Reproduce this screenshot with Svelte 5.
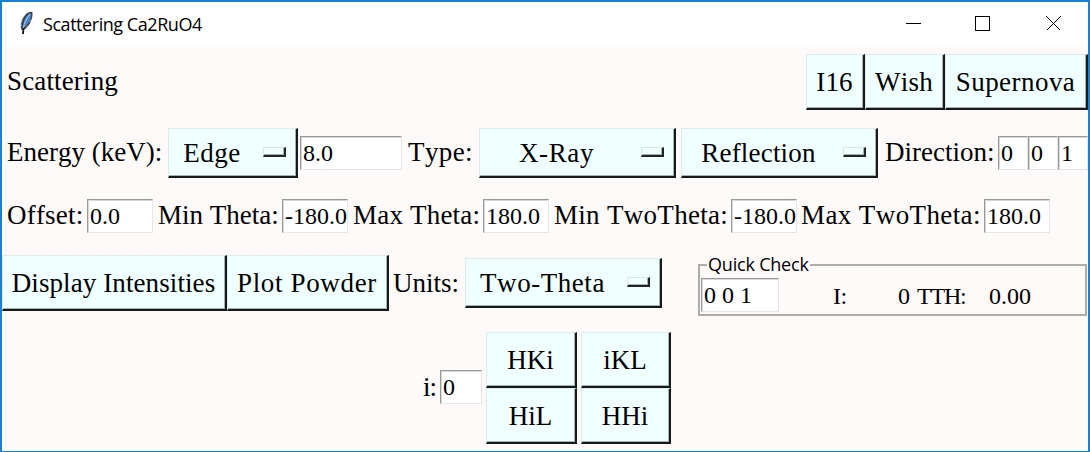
<script>
  const instruments = [
    { text: 'I16', w: 59, track: 0.2 },
    { text: 'Wish', w: 80, track: 0.2 },
    { text: 'Supernova', w: 143, track: 0.45 },
  ];
  const beam = [
    { kind: 'label', text: 'Energy (keV):', w: 162, pad: 5 },
    { kind: 'menu', text: 'Edge', w: 130, gap: 4, track: 0.5 },
    { kind: 'entry', text: '8.0', w: 102, gap: 2 },
    { kind: 'label', text: 'Type:', w: 75, pad: 6, track: 0.4 },
    { kind: 'menu', text: 'X-Ray', w: 197, gap: 2, track: 0.6 },
    { kind: 'menu', text: 'Reflection', w: 197, gap: 5, track: 0.2 },
    { kind: 'label', text: 'Direction:', w: 118, pad: 7 },
    { kind: 'entry', text: '0', w: 30, gap: 2 },
    { kind: 'entry', text: '0', w: 30 },
    { kind: 'entry', text: '1', w: 30 },
  ];
  const limits = [
    { kind: 'label', text: 'Offset:', w: 85, pad: 5, track: 0.2 },
    { kind: 'entry', text: '0.0', w: 66 },
    { kind: 'label', text: 'Min Theta:', w: 129, pad: 5 },
    { kind: 'entry', text: '-180.0', w: 66 },
    { kind: 'label', text: 'Max Theta:', w: 135, pad: 5, track: 0.2 },
    { kind: 'entry', text: '180.0', w: 66 },
    { kind: 'label', text: 'Min TwoTheta:', w: 182, pad: 5, track: 0.3 },
    { kind: 'entry', text: '-180.0', w: 66 },
    { kind: 'label', text: 'Max TwoTheta:', w: 187, pad: 4, track: 0.4 },
    { kind: 'entry', text: '180.0', w: 66 },
  ];
  const actions = [
    { kind: 'button', text: 'Display Intensities', w: 225, track: 0.1 },
    { kind: 'button', text: 'Plot Powder', w: 162, track: 0.65 },
    { kind: 'label', text: 'Units:', w: 74, pad: 4 },
    { kind: 'menu', text: 'Two-Theta', w: 197, gap: 2, track: 0.55 },
  ];
  const planes = ['HKi', 'iKL', 'HiL', 'HHi'];
</script>

{#snippet widget(item)}
  <div
    class={item.kind ?? 'button'}
    style:width="{item.w}px"
    style:margin-left="{item.gap ?? 0}px"
    style:padding-left={item.pad ? `${item.pad}px` : null}
    style:letter-spacing={item.track ? `${item.track}px` : null}
  >
    <span>{item.text}</span>
    {#if item.kind === 'menu'}<i class="indicator"></i>{/if}
  </div>
{/snippet}

<div class="window">
  <header>
    <svg class="feather" width="18" height="26" viewBox="0 0 18 26">
      <path d="M3.500 20C1.500 15 4 8 8 4C11 1.500 14 1 14.500 2.500C15 8 12 16 6.500 19.500Z" fill="#3a4450" />
      <path d="M5.500 17.500C5 12 7 7 11 4C13 3 13.500 4 13 6.500C12 11 9 15.500 5.500 17.500Z" fill="#4a86c8" />
      <path d="M12 4C8.500 8 6.500 13 5 19" stroke="#a9cdf0" fill="none" />
      <path d="M3 10L4.500 11M3 15L4 15.500M13.500 10L11.500 11.500M10 16L8.500 16.500" stroke="#c5c5c5" />
      <path d="M5.500 18L5 24" stroke="#111" stroke-width="1.800" />
    </svg>
    <span class="title">Scattering Ca2RuO4</span>
    <svg class="controls" width="160" height="16" viewBox="0 0 160 16" fill="none" stroke="#000" shape-rendering="crispEdges">
      <path d="M0 7.500H15M69.500 .5H83.500V14.500H69.500Z" />
      <path d="M140.500 .5L154.500 14.500M154.500 .5L140.500 14.500" />
    </svg>
  </header>

  <div class="row top">
    <div class="label heading"><span>Scattering</span></div>
    {#each instruments as item}{@render widget(item)}{/each}
  </div>
  <div class="row beam">
    {#each beam as item}{@render widget(item)}{/each}
  </div>
  <div class="row limits">
    {#each limits as item}{@render widget(item)}{/each}
  </div>
  <div class="row actions">
    {#each actions as item}{@render widget(item)}{/each}
    <fieldset>
      <legend>Quick Check</legend>
      <div class="check">
        <div class="entry hkl"><span>0 0 1</span></div>
        <span class="name">I:</span>
        <span class="value">0</span>
        <span class="tth">TTH:</span>
        <span class="angle">0.00</span>
      </div>
    </fieldset>
  </div>
  <div class="row cuts">
    <div class="label"><span>i:</span></div>
    <div class="entry index"><span>0</span></div>
    <div class="planes">
      {#each planes as text}<div class="button"><span>{text}</span></div>{/each}
    </div>
  </div>
</div>

<style>
  :global(body) {
    overflow: hidden;
  }
  .window {
    box-sizing: border-box;
    width: 1090px;
    height: 452px;
    border: 2px solid #1a80d6;
    border-bottom-width: 1px;
    background: #fffafa;
    color: #000;
    font: 27px/30px 'Liberation Serif', serif;
    font-kerning: none;
    font-variant-ligatures: none;
    overflow: hidden;
  }
  .window * {
    box-sizing: border-box;
  }
  header {
    display: flex;
    align-items: center;
    height: 45px;
    background: #fff;
    padding-left: 16px;
  }
  .feather {
    margin-top: -4px;
  }
  .title {
    flex: 1;
    margin: -1px 0 0 7px;
    font: 18px/24px 'Open Sans', sans-serif;
    letter-spacing: -0.45px;
  }
  .controls {
    margin: -1px 22px 0 0;
  }
  .row {
    display: flex;
    align-items: center;
    white-space: nowrap;
  }
  .top {
    height: 56px;
    margin-top: 7px;
  }
  .beam {
    height: 50px;
    margin-top: 18px;
  }
  .limits {
    height: 34px;
    margin-top: 21px;
  }
  .actions {
    height: 61px;
    margin-top: 22px;
    align-items: flex-start;
  }
  .cuts {
    height: 112px;
    margin-top: 16px;
    padding-left: 421px;
  }
  .label,
  .button,
  .menu,
  .entry {
    flex: none;
  }
  .label {
    padding-bottom: 2px;
  }
  .heading {
    width: 804px;
    padding-left: 5px;
    letter-spacing: 0.15px;
  }
  .button,
  .menu {
    display: flex;
    align-items: center;
    justify-content: center;
    background: #f0ffff;
    border: 1px solid #dfeaea;
    border-right: 2px solid #151a1a;
    border-bottom: 2px solid #151a1a;
    box-shadow: inset -1px -1px #a5b0b0;
  }
  .button {
    height: 56px;
    padding-right: 1px;
  }
  .menu {
    height: 50px;
    padding: 0 10px 0 5px;
  }
  .menu span {
    flex: 1;
    text-align: center;
    padding-right: 13px;
  }
  .indicator {
    width: 23px;
    height: 10px;
    margin-top: -1px;
    border: 1px solid #dbe5e5;
    border-right: 2px solid #202626;
    border-bottom: 2px solid #202626;
    box-shadow: inset -1px -1px #a5b0b0;
  }
  .entry {
    height: 34px;
    background: #fff;
    border: 1px solid #e6e6e6;
    border-top-color: #999;
    border-left-color: #999;
    box-shadow: inset 1px 1px #d8d8d8;
    padding-left: 2px;
    font-size: 24px;
    line-height: 32px;
    overflow: hidden;
  }
  .actions .label {
    margin-top: 13px;
  }
  .actions .menu {
    margin-top: 3px;
  }
  fieldset {
    width: 389px;
    height: 61px;
    margin: 0 0 0 36px;
    padding: 0;
    border: 2px solid #b0acac;
    min-width: 0;
  }
  legend {
    margin-left: 7px;
    padding: 0 1px;
    font: 18px/19px 'Open Sans', sans-serif;
    letter-spacing: -0.2px;
  }
  .check {
    display: flex;
    align-items: center;
    height: 42px;
    font-size: 24px;
    padding-left: 1px;
  }
  .hkl {
    width: 78px;
  }
  .name {
    width: 66px;
    padding: 1px 0 0 54px;
    letter-spacing: -0.5px;
  }
  .value {
    width: 65px;
    padding-top: 1px;
    text-align: right;
  }
  .tth {
    padding: 1px 0 0 7px;
    width: 79px;
    letter-spacing: -1.2px;
  }
  .angle {
    padding-top: 1px;
  }
  .index {
    width: 42px;
    margin-top: -2px;
  }
  .cuts .label {
    width: 17px;
    padding-bottom: 3px;
    letter-spacing: -1px;
  }
  .planes {
    display: grid;
    grid-template-columns: 91px 90px;
    column-gap: 4px;
    margin-left: 4px;
  }
</style>
